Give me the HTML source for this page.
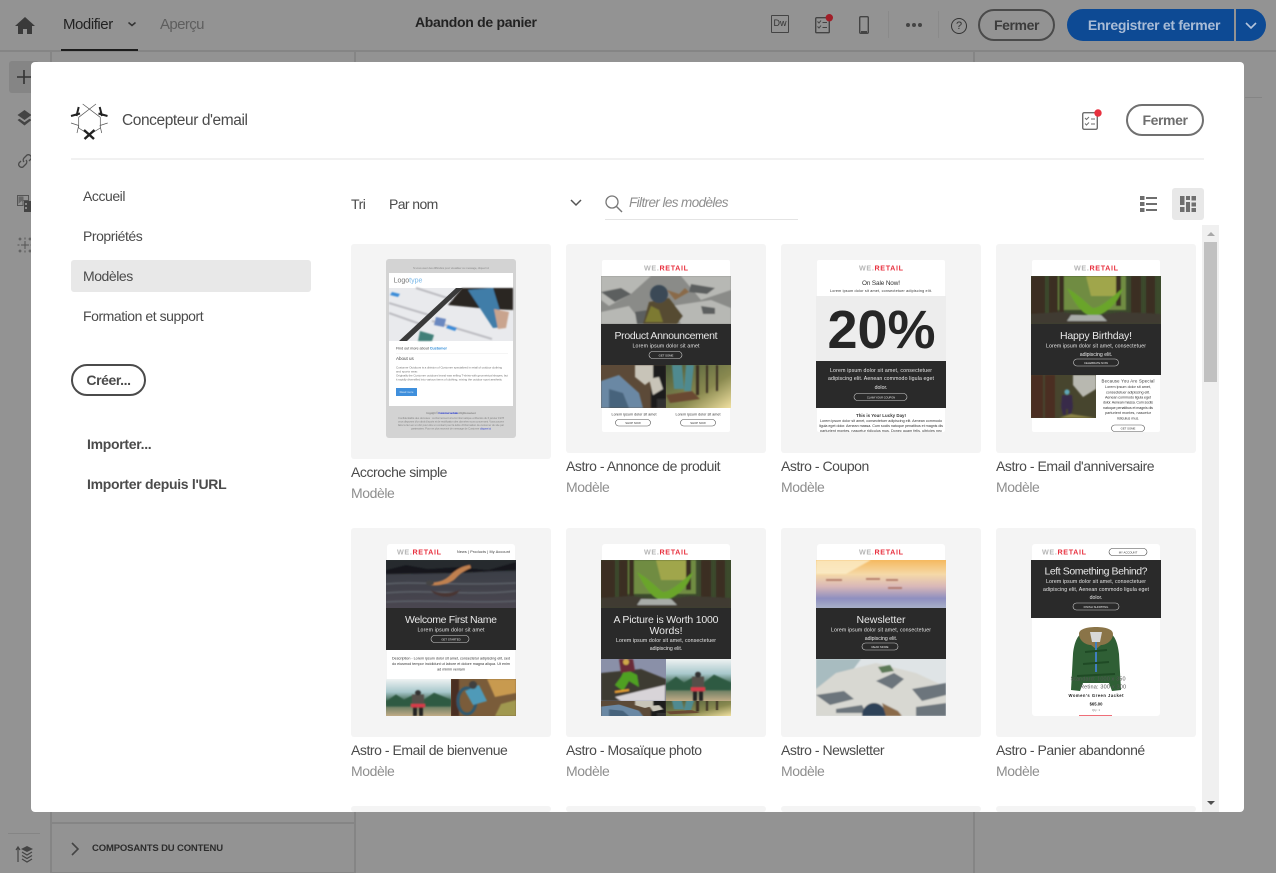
<!DOCTYPE html>
<html lang="fr">
<head>
<meta charset="utf-8">
<title>Concepteur d'email</title>
<style>
html,body{margin:0;padding:0;width:1276px;height:873px;overflow:hidden;background:#939393;font-family:"Liberation Sans",sans-serif}
*{box-sizing:border-box}
.a{position:absolute;white-space:nowrap}
.t{line-height:20px;height:20px;font-size:14px;letter-spacing:-.45px}
.line{position:absolute;background:#858585}
.pill{position:absolute;border-radius:17px;border:2px solid #666;text-align:center;font-weight:bold;font-size:14px;letter-spacing:-.4px}
#modal{position:absolute;left:31px;top:62px;width:1213px;height:750px;background:#fff;border-radius:4px;overflow:hidden}
#modal .a{color:#4b4b4b}
.card{position:absolute;width:200px;height:209px;background:#f4f4f4;border-radius:3px}
.card svg{position:absolute;left:35px;top:16px;width:130px;height:172px;filter:blur(.3px)}
.nm{position:absolute;white-space:nowrap;font-size:14px;letter-spacing:-.45px;color:#4b4b4b;line-height:20px}
.md{position:absolute;white-space:nowrap;font-size:14px;letter-spacing:-.42px;color:#8e8e8e;line-height:20px}
svg text{font-family:"Liberation Sans",sans-serif;text-anchor:middle}
.w{fill:#e8e8e8}.k{fill:#333}
.logo{font-size:7.2px;font-weight:bold}
.l{font-size:5.2px}.s{font-size:3.7px}
.h{font-size:10.5px}
</style>
</head>
<body>
<svg width="0" height="0" style="position:absolute">
<defs>
<filter id="b"><feGaussianBlur stdDeviation=".8"/></filter>
<linearGradient id="sky" x1="0" y1="0" x2="0" y2="1"><stop offset="0" stop-color="#f5b95f"/><stop offset=".3" stop-color="#f5d9a8"/><stop offset=".55" stop-color="#d9b8b8"/><stop offset=".8" stop-color="#8f8fc0"/><stop offset="1" stop-color="#a8b0c8"/></linearGradient>
<linearGradient id="wat" x1="0" y1="0" x2="0" y2="1"><stop offset="0" stop-color="#30343a"/><stop offset=".3" stop-color="#3d4048"/><stop offset="1" stop-color="#4a4650"/></linearGradient>
<linearGradient id="mts" x1="0" y1="0" x2="0" y2="1"><stop offset="0" stop-color="#eef2f2"/><stop offset=".35" stop-color="#a8c8cc"/><stop offset=".6" stop-color="#3f6650"/><stop offset="1" stop-color="#c0ab86"/></linearGradient>
<linearGradient id="wd" x1="0" y1="0" x2="1" y2="1"><stop offset="0" stop-color="#4a5a3a"/><stop offset=".6" stop-color="#8a8a50"/><stop offset="1" stop-color="#f0e0a0"/></linearGradient>
<symbol id="rocks" viewBox="0 0 130 48" preserveAspectRatio="none"><rect width="130" height="48" fill="#8a8b88"/><g filter="url(#b)"><path d="M0 0h50L30 18 8 30 0 24zM80 0h50v14L100 24zM70 30l40-6 20 8v16H80zM0 36l28-6 14 18H0z" fill="#b7b8b4"/><path d="M0 16l20-4 10 6-16 8zM90 8l24 4-8 6-18-2zM34 36l14-2 6 14H36zM100 30l14 2 0 6-12 0z" fill="#5c5e5e"/><path d="M42 48l6-22 20-4 14 18-6 8z" fill="#574c32"/><path d="M44 46l6-16 8 4 4 12z" fill="#7d7a30"/><circle cx="58" cy="18" r="9" fill="#3b4a56"/><path d="M66 14l12 4 6-6 4 4-14 8z" fill="#8a6a48"/></g></symbol>
<symbol id="forest" viewBox="0 0 130 48" preserveAspectRatio="none"><rect width="130" height="48" fill="#3c4a2c"/><g filter="url(#b)"><rect x="25" width="70" height="34" fill="#6f8c42"/><path d="M55 0h35v20H60z" fill="#a0a64c"/><path d="M0 0h14v48H0zM18 0h9v40h-9zM28 0h5v36h-5zM100 0h10v40h-10zM115 0h9v44h-9zM85 0h5v30h-5z" fill="#3b2e22"/><path d="M36 12c14 8 22 18 26 20 8 0 20-12 30-20-6 18-20 28-30 28S44 28 36 12z" fill="#6aa52a"/><path d="M0 38l30-2 30 4 30-4 40 2v10H0z" fill="#3f3a32"/><path d="M40 39l30 0 6 6H36z" fill="#a8aca8"/></g></symbol>
<symbol id="swim" viewBox="0 0 130 48" preserveAspectRatio="none"><rect width="130" height="48" fill="url(#wat)"/><g filter="url(#b)"><rect width="130" height="11" fill="#26292e"/><path d="M0 10l20-5 22 4 30-2 30 3 28-8v8L70 13 0 14z" fill="#15181b"/><path d="M0 24c30-3 60 2 130-1M0 33c40-4 80 3 130-2M0 42c40-3 90 2 130-1" stroke="#5c6068" stroke-width="1.500" fill="none"/><path d="M42 23c8-1 14-1 20-6 6-5 10-10 22-12l1 3c-8 3-12 7-16 11-4 4-16 8-27 6z" fill="#c08050"/><ellipse cx="44" cy="23" rx="4" ry="2.500" fill="#444"/><path d="M44 30c10 4 20 4 30 0-4 8-20 10-30 0z" fill="#4a3432"/></g></symbol>
<symbol id="sunset" viewBox="0 0 130 48" preserveAspectRatio="none"><rect width="130" height="48" fill="url(#sky)"/><g filter="url(#b)"><path d="M0 0h55L30 14H0z" fill="#fbeecb" opacity=".8"/><path d="M10 20h16M50 19h14M70 20h12M72 28h14" stroke="#a86a5a" stroke-width="1.600"/></g></symbol>
<symbol id="snowrock" viewBox="0 0 130 57" preserveAspectRatio="none"><rect width="130" height="57" fill="#dfe4e6"/><g filter="url(#b)"><path d="M0 0h45L30 20 0 30z" fill="#a8bcc0"/><path d="M20 14l40-10 40 10 30 14v29H0V30z" fill="#d8d8d2"/><path d="M0 36l28-4 10 8-24 6zM60 22l18-8 10 6-12 10zM96 30l34-6v12l-24 6zM20 50l26-4 4 8H20zM100 48l30-4v13h-30z" fill="#6c757c"/><path d="M62 8l12-2 4 6-12 2z" fill="#5d7a58"/><path d="M46 57c0-8 6-13 12-13s12 5 12 13z" fill="#2f4358"/><path d="M66 44l16 8 4 5H70z" fill="#8a6a48"/></g></symbol>
<symbol id="jeans" viewBox="0 0 65 43" preserveAspectRatio="none"><rect width="65" height="43" fill="#5c4a38"/><g filter="url(#b)"><path d="M0 16l18-6 20 18 4 15H0z" fill="#6a88a4"/><path d="M8 24l14 4 6 15H8z" fill="#47637c"/><rect x="50" width="15" height="43" fill="#1d1d1c"/><path d="M34 0h18v14l-8 6-10-8zM48 14l10-2 4 12-10 6z" fill="#c8c4b8"/><rect x="56" y="34" width="9" height="9" fill="#333"/></g></symbol>
<symbol id="woods" viewBox="0 0 65 43" preserveAspectRatio="none"><rect width="65" height="43" fill="url(#wd)"/><g filter="url(#b)"><path d="M30 0h3v30h-3zM40 0h2v28h-2zM50 0h2v26h-2zM20 0h4v26h-4z" fill="#3a2e20"/><path d="M6 0h10l2 24-10 0zM20 0h8l-3 26h-7z" fill="#4f8a90"/><path d="M0 30l26-4 8 8-30 4z" fill="#6a4a30"/></g></symbol>
<symbol id="hiker" viewBox="0 0 65 43" preserveAspectRatio="none"><rect width="65" height="43" fill="#47452e"/><g filter="url(#b)"><path d="M42 0h23v14L52 22 42 10z" fill="#b8b8b0"/><path d="M0 0h12v43H0zM14 0h10v43H14z" fill="#4b2e24"/><circle cx="36" cy="17" r="2.600" fill="#5fa6b8"/><path d="M31 20h10l1 12-2 8h-3v-6h-2v6h-3l-2-8z" fill="#392a48"/><path d="M28 43l12-4 25 4z" fill="#8a8244"/></g></symbol>
<symbol id="mount" viewBox="0 0 65 43" preserveAspectRatio="none"><rect width="65" height="43" fill="url(#mts)"/><g filter="url(#b)"><path d="M0 26l10-8 8 6 10-6 10 6 10-8 17 8v8H0z" fill="#2f5a42"/><rect x="26" y="18" width="12" height="14" fill="#55504a"/><circle cx="32" cy="16" r="3" fill="#333"/><rect x="25" y="29" width="14" height="4" fill="#d83a48"/><rect x="27" y="33" width="4" height="10" fill="#222"/><rect x="33" y="33" width="4" height="10" fill="#222"/></g></symbol>
<symbol id="bike" viewBox="0 0 65 37" preserveAspectRatio="none"><rect width="65" height="37" fill="#7a5c3a"/><g filter="url(#b)"><path d="M36 0h29v14L44 18z" fill="#c89a50"/><path d="M0 0h8v37H0z" fill="#4a2f24"/><path d="M44 37l6-12 15-4v16z" fill="#a09850"/><ellipse cx="16" cy="22" rx="9" ry="13" fill="none" stroke="#2f5870" stroke-width="3"/><path d="M14 12l14-6 8 16-14 4z" fill="#4f9ab8"/><circle cx="22" cy="6" r="4" fill="#3f3f3f"/></g></symbol>
<symbol id="skier" viewBox="0 0 65 42" preserveAspectRatio="none"><rect width="65" height="42" fill="#8a90a8"/><g filter="url(#b)"><path d="M0 14l40-4 25 10v22H0z" fill="#3e3a30"/><path d="M14 38l50-12v16H20z" fill="#d8d4d8"/><path d="M14 26l8 6 6-10 10 6-2-12-12-6-4 8z" fill="#4fa020"/><path d="M18 0h14l2 12-14 2z" fill="#6a2a38"/><circle cx="25" cy="3" r="3" fill="#cfa84a"/><path d="M14 33l14-2" stroke="#e8a030" stroke-width="2"/></g></symbol>
</defs>
</svg>

<!-- background app -->
<div class="line" style="left:0;top:50px;width:1276px;height:2px"></div>
<svg class="a" style="left:14px;top:16px" width="22" height="20" viewBox="0 0 22 20"><path d="M11 1L1 10h3v8h5v-5h4v5h5v-8h3z" fill="#3a3a3a"/></svg>
<div class="a" style="left:63px;top:15px;font-size:15px;letter-spacing:-.45px;color:#222;line-height:20px">Modifier</div>
<svg class="a" style="left:127px;top:21px" width="10" height="7" viewBox="0 0 10 7"><path d="M1.500 1.500L5 4.500l3.500-3" fill="none" stroke="#333" stroke-width="1.500"/></svg>
<div class="a" style="left:160px;top:15px;font-size:15px;letter-spacing:-.6px;color:#5e5e5e;line-height:20px">Aperçu</div>
<div class="a" style="left:61px;top:49px;width:77px;height:2px;background:#1c1c1c"></div>
<div class="a" style="left:415px;top:12px;font-size:14px;letter-spacing:-.3px;font-weight:bold;color:#222;line-height:20px">Abandon de panier</div>
<div class="a" style="left:771px;top:15px;width:18px;height:18px;border:1.500px solid #444;border-radius:1px;font-size:9px;line-height:15px;text-align:center;color:#333">Dw</div>
<svg class="a" style="left:812px;top:13px" width="24" height="22" viewBox="0 0 24 22"><rect x="3.700" y="4.700" width="13.600" height="15" rx="1" fill="none" stroke="#444" stroke-width="1.400"/><path d="M5.500 8.500l1.500 1.500 2-2.500M5.500 13.500L7 15l2-2.500M10.500 9.500h4.500M10.500 14.500h4.500" fill="none" stroke="#444"/><circle cx="17.300" cy="4.700" r="3.700" fill="#a11e28"/></svg>
<svg class="a" style="left:857px;top:14px" width="14" height="22" viewBox="0 0 14 22"><rect x="2.700" y="2.700" width="8.600" height="16.600" rx="1.200" fill="none" stroke="#444" stroke-width="1.400"/><rect x="4" y="17" width="6" height="2" fill="#444"/></svg>
<div class="a" style="left:888px;top:11px;width:1px;height:27px;background:#8a8a8a"></div>
<svg class="a" style="left:905px;top:22px" width="18" height="6" viewBox="0 0 18 6"><circle cx="3" cy="3" r="2" fill="#444"/><circle cx="9" cy="3" r="2" fill="#444"/><circle cx="15" cy="3" r="2" fill="#444"/></svg>
<div class="a" style="left:938px;top:11px;width:1px;height:27px;background:#8a8a8a"></div>
<div class="a" style="left:951px;top:18px;width:16px;height:16px;border:1.200px solid #333;border-radius:50%;font-size:11px;line-height:14px;text-align:center;color:#333">?</div>
<div class="pill" style="left:978px;top:9px;width:77px;height:32px;border-color:#4a4a4a;color:#3c3c3c;line-height:28px">Fermer</div>
<div class="a" style="left:1067px;top:9px;width:167px;height:32px;padding-left:7px;background:#0d4a94;border-radius:16px 0 0 16px;color:#a9bcd6;font-weight:bold;font-size:14px;letter-spacing:-.3px;line-height:32px;text-align:center">Enregistrer et fermer</div>
<div class="a" style="left:1236px;top:9px;width:30px;height:32px;background:#0d4a94;border-radius:0 16px 16px 0"></div>
<svg class="a" style="left:1244px;top:21px" width="14" height="10" viewBox="0 0 14 10"><path d="M2 2l5 5 5-5" fill="none" stroke="#b5c5dc" stroke-width="1.600"/></svg>

<div class="line" style="left:50px;top:50px;width:2px;height:823px"></div>
<div class="line" style="left:354px;top:50px;width:2px;height:823px"></div>
<div class="line" style="left:973px;top:50px;width:2px;height:823px"></div>
<div class="line" style="left:1245px;top:97px;width:17px;height:1px"></div>
<div class="line" style="left:50px;top:822px;width:305px;height:2px"></div>
<div class="line" style="left:50px;top:872px;width:305px;height:1px"></div>
<div class="a" style="left:9px;top:61px;width:30px;height:32px;background:#858585;border-radius:3px"></div>
<svg class="a" style="left:17px;top:70px" width="14" height="14" viewBox="0 0 14 14"><path d="M7 0v14M0 7h14" stroke="#333" stroke-width="1.600"/></svg>
<svg class="a" style="left:17px;top:110px" width="15" height="17" viewBox="0 0 15 17"><path d="M7.500 0l7 5-7 5-7-5zM.5 10l2-1.300 5 3.500 5-3.500 2 1.300-7 5.500z" fill="#444"/></svg>
<svg class="a" style="left:17px;top:153px" width="16" height="16" viewBox="0 0 16 16"><path d="M7 9a3 3 0 0 1 0-4l3-3a3 3 0 0 1 4 4l-2 2M9 7a3 3 0 0 1 0 4l-3 3a3 3 0 0 1-4-4l2-2" fill="none" stroke="#4a4a4a" stroke-width="1.300"/></svg>
<svg class="a" style="left:17px;top:195px" width="16" height="17" viewBox="0 0 16 17"><path d="M.5.500h11v5H6v5H.5z" fill="none" stroke="#555"/><path d="M1.500 9l3-3 2 2V1.500H1.500z" fill="#666"/><path d="M7 6h9v11H7z" fill="#444"/><path d="M8 8h2v2H8zM8 12h2v2H8z" fill="#8a8a8a"/></svg>
<svg class="a" style="left:17px;top:237px" width="16" height="16" viewBox="0 0 16 16"><path d="M8 4v8M4 8h8M3 .5v3M1.500 2h3M13 .5v3M11.500 2h3M3 12.500v3M1.500 14h3M13 12.500v3M11.500 14h3M8 .5v2M8 13.500v2M.5 8h2M13.500 8h2" stroke="#555"/></svg>
<div class="line" style="left:8px;top:833px;width:32px;height:1px"></div>
<svg class="a" style="left:15px;top:845px" width="20" height="18" viewBox="0 0 20 18"><path d="M3 17V3M1 5l2-3 2 3" fill="none" stroke="#444" stroke-width="1.200"/><path d="M12 1l6 3-6 3-6-3z" fill="#444"/><path d="M7 7l5 3 5-3M7 10.500l5 3 5-3M7 14l5 3 5-3" fill="none" stroke="#444" stroke-width="1.200"/></svg>
<svg class="a" style="left:70px;top:841px" width="11" height="16" viewBox="0 0 11 16"><path d="M2 2l6 6-6 6" fill="none" stroke="#444" stroke-width="1.600"/></svg>
<div class="a" style="left:92px;top:842px;font-size:9.500px;font-weight:bold;letter-spacing:-.15px;line-height:14px;color:#2c2c2c">COMPOSANTS DU CONTENU</div>

<!-- modal -->
<div id="modal">
  <svg class="a" style="left:38px;top:38px" width="41" height="40" viewBox="0 0 41 40">
    <path d="M13.700 4L31.300 17.300M27 4L9.700 17.300M9.700 17.300V28M31.300 17.300V28M9.700 28L20.300 34.700M31.300 28L20.300 34.700M2 23l7.700 2.500L8 33M38.700 23L31 25.500 32.700 33" stroke="#555" stroke-width=".7" fill="none"/>
    <path d="M9.700 7L7.500 16M2 16l9-2.500M30.700 7L33 16M38.500 16l-9-2.500" stroke="#222" stroke-width="2" fill="none"/>
    <path d="M15 30l10 9M25.500 30l-10 9" stroke="#222" stroke-width="2.400" fill="none"/>
  </svg>
  <div class="a" style="left:91px;top:49px;font-size:15.500px;letter-spacing:-.42px;line-height:20px">Concepteur d'email</div>
  <svg class="a" style="left:1050px;top:45px" width="24" height="24" viewBox="0 0 24 24"><rect x="1.700" y="5.700" width="14.600" height="16.600" rx="1.500" fill="none" stroke="#6e6e6e" stroke-width="1.400"/><path d="M4 11l1.500 1.500L8 10M4 16.500L5.500 18 8 15.500M10 12h4M10 17h4" fill="none" stroke="#6e6e6e"/><circle cx="17" cy="6" r="3.700" fill="#e8313f"/></svg>
  <div class="pill" style="left:1095px;top:42px;width:78px;height:32px;border-color:#707070;color:#6e6e6e;line-height:28px">Fermer</div>
  <div class="a" style="left:40px;top:96px;width:1133px;height:2px;background:#f1f1f1"></div>

  <div class="a t" style="left:52px;top:124px">Accueil</div>
  <div class="a t" style="left:52px;top:164px">Propriétés</div>
  <div class="a" style="left:40px;top:198px;width:240px;height:32px;background:#e8e8e8;border-radius:3px"></div>
  <div class="a t" style="left:52px;top:204px">Modèles</div>
  <div class="a t" style="left:52px;top:244px">Formation et support</div>
  <div class="pill" style="left:40px;top:302px;width:75px;height:32px;border-color:#4b4b4b;color:#4b4b4b;line-height:28px">Créer...</div>
  <div class="a t" style="left:56px;top:372px;font-weight:bold;letter-spacing:-.3px">Importer...</div>
  <div class="a t" style="left:56px;top:412px;font-weight:bold;letter-spacing:-.3px">Importer depuis l'URL</div>

  <div class="a t" style="left:320px;top:132px">Tri</div>
  <div class="a t" style="left:358px;top:132px;letter-spacing:-.6px">Par nom</div>
  <svg class="a" style="left:538px;top:136px" width="14" height="10" viewBox="0 0 14 10"><path d="M2 2l5 5 5-5" fill="none" stroke="#555" stroke-width="1.500"/></svg>
  <svg class="a" style="left:573px;top:132px" width="20" height="20" viewBox="0 0 20 20"><circle cx="8" cy="8" r="6" fill="none" stroke="#777" stroke-width="1.300"/><path d="M12.500 12.500L18 18" stroke="#777" stroke-width="1.400"/></svg>
  <div class="a t" style="left:598px;top:131px;font-style:italic;color:#8e8e8e;font-size:13.500px;letter-spacing:-.6px">Filtrer les modèles</div>
  <div class="a" style="left:574px;top:157px;width:193px;height:1px;background:#e4e4e4"></div>
  <svg class="a" style="left:1109px;top:134px" width="17" height="16" viewBox="0 0 17 16"><path d="M0 0h4.500v4H0zM0 6h4.500v4H0zM0 12h4.500v4H0zM6 1h11v2H6zM6 7h11v2H6zM6 13h11v2H6z" fill="#6e6e6e"/></svg>
  <div class="a" style="left:1141px;top:126px;width:32px;height:32px;background:#e8e8e8;border-radius:3px"></div>
  <svg class="a" style="left:1149px;top:134px" width="16" height="16" viewBox="0 0 16 16"><path d="M0 0h4.500v9H0zM0 11h4.500v5H0zM6 0h4v4H6zM6 6h4v10H6zM11.500 0H16v4.500h-4.500zM11.500 6.500H16v4h-4.500zM11.500 12H16v4h-4.500z" fill="#6e6e6e"/></svg>

  <!-- row 1 -->
  <div class="card" style="left:320px;top:182px;height:215px">
    <svg viewBox="0 0 130 179" style="left:35px;top:15px;width:130px;height:179px">
      <rect width="130" height="179" rx="3" fill="#d3d3d3"/>
      <text x="65" y="10" font-size="2.800" fill="#8c8c8c" textLength="76">Si vous avez des difficultés pour visualiser ce message, cliquez ici</text>
      <rect x="3" y="14" width="124" height="133" fill="#fff"/>
      <text x="22" y="23.500" font-size="7" fill="#777">Logo<tspan fill="#7ab8e8">type</tspan></text>
      <rect x="3" y="29" width="124" height="53" fill="#e9eaed"/>
      <g filter="url(#b)">
        <path d="M3 44l40 12M3 54l34 12M30 29l50 16M46 62l60 18" stroke="#bdbdc2" stroke-width="2"/>
        <path d="M76 29h51v22l-24-1-41-4z" fill="#2a2622"/>
        <path d="M82 31l25-2 12 39-12 1z" fill="#3f7da8"/>
        <path d="M108 50l15 3-3 16-8 1z" fill="#c9a48e"/>
        <path d="M50 58l10 2-2 8-10-2z" fill="#6a88c0"/>
        <path d="M34 72l14 4-2 6H32z" fill="#3f7f78"/>
        <path d="M6 33l8 2-2 3-8-2zM62 66l9 3-2 3-9-3z" fill="#3a8cd8"/>
      </g>
      <path d="M70 29h7L21 82h-8z" fill="#3a3a3a"/>
      <text x="10" y="90.500" font-size="3.800" fill="#444" style="text-anchor:start" textLength="51">Find out more about <tspan fill="#2f8cd8" font-weight="bold">Customer</tspan></text>
      <rect x="10" y="94" width="112" height=".6" fill="#eee"/>
      <text x="10" y="101" font-size="4.500" fill="#444" style="text-anchor:start">About us</text>
      <text x="10" y="109.500" font-size="3" fill="#777" style="text-anchor:start" textLength="106">Customer Outdoors is a division of Customer specialized in retail of outdoor clothing</text>
      <text x="10" y="113.500" font-size="3" fill="#777" style="text-anchor:start">and sports wear.</text>
      <text x="10" y="117.500" font-size="3" fill="#777" style="text-anchor:start" textLength="112">Originally the Customer outdoors brand was selling T-shirts with geometrical shapes, but</text>
      <text x="10" y="121.500" font-size="3" fill="#777" style="text-anchor:start" textLength="106">it rapidly diversified into various items of clothing, mixing the outdoor sport aesthetic</text>
      <rect x="10" y="129" width="21" height="8" fill="#3f8fdc"/>
      <text x="20.500" y="134" font-size="2.800" fill="#d8e8f8">Read more</text>
      <text x="65" y="155" font-size="2.800" fill="#777" textLength="50">Copyright © <tspan fill="#3344cc" font-weight="bold">Customer website</tspan> All rights reserved.</text>
      <text x="65" y="160" font-size="2.800" fill="#888" textLength="106">Confidentialité des données : conformément à la loi informatique et libertés du 6 janvier 1978</text>
      <text x="65" y="163.500" font-size="2.800" fill="#888" textLength="106">vous disposez d'un droit d'accès et de rectification des données vous concernant. Vous pouvez</text>
      <text x="65" y="167" font-size="2.800" fill="#888" textLength="106">faire le lien en un clic pour être un contact pour la lettre d'information de customer du site par</text>
      <text x="65" y="170.500" font-size="2.800" fill="#888" textLength="80">partenaires. Pour ne plus recevoir de message de Customer <tspan fill="#3344cc">cliquez ici</tspan></text>
    </svg>
  </div>
  <div class="nm" style="left:320px;top:400px">Accroche simple</div>
  <div class="md" style="left:320px;top:421px">Modèle</div>

  <div class="card" style="left:535px;top:182px">
    <svg viewBox="0 0 130 172">
      <rect x="1" width="128" height="172" fill="#fff" rx="2"/>
      <text x="65" y="10.500" class="logo" fill="#b5b5b5" textLength="44">WE.<tspan fill="#e8313f">RETAIL</tspan></text>
      <use href="#rocks" x="0" y="16" width="130" height="48"/>
      <rect y="64" width="130" height="41" fill="#2a2a2a"/>
      <text x="65" y="79" class="h w" textLength="103">Product Announcement</text>
      <text x="65" y="87.500" class="l w" textLength="67">Lorem ipsum dolor sit amet</text>
      <rect x="48" y="91.500" width="33" height="7" rx="3.500" fill="none" stroke="#ccc" stroke-width=".6"/>
      <text x="65" y="96.500" font-size="2.800" class="w">GET SOME</text>
      <use href="#jeans" x="0" y="105" width="65" height="43"/>
      <use href="#woods" x="65" y="105" width="65" height="43"/>
      <text x="33" y="155.500" class="s k" textLength="45">Lorem ipsum dolor sit amet</text>
      <text x="97" y="155.500" class="s k" textLength="45">Lorem ipsum dolor sit amet</text>
      <rect x="14.500" y="159.500" width="35" height="6.500" rx="3.200" fill="#fff" stroke="#555" stroke-width=".6"/>
      <rect x="79.500" y="159.500" width="35" height="6.500" rx="3.200" fill="#fff" stroke="#555" stroke-width=".6"/>
      <text x="32" y="164" font-size="2.800" class="k">SHOP NOW</text>
      <text x="97" y="164" font-size="2.800" class="k">SHOP NOW</text>
    </svg>
  </div>
  <div class="nm" style="left:535px;top:394px">Astro - Annonce de produit</div>
  <div class="md" style="left:535px;top:415px">Modèle</div>

  <div class="card" style="left:750px;top:182px">
    <svg viewBox="0 0 130 172">
      <rect x="1" width="128" height="172" fill="#fff" rx="2"/>
      <text x="65" y="10.500" class="logo" fill="#b5b5b5" textLength="44">WE.<tspan fill="#e8313f">RETAIL</tspan></text>
      <text x="65" y="25" font-size="6.400" class="k" textLength="38">On Sale Now!</text>
      <text x="65" y="32" class="s k" textLength="102">Lorem ipsum dolor sit amet, consectetuer adipiscing elit.</text>
      <rect y="36" width="130" height="65" fill="#ededed"/>
      <text x="65.500" y="88" font-size="54" font-weight="bold" fill="#262626">20%</text>
      <rect y="101" width="130" height="47" fill="#2a2a2a"/>
      <text x="65" y="112" class="l w" textLength="102">Lorem ipsum dolor sit amet, consectetuer</text>
      <text x="65" y="120" class="l w" textLength="106">adipiscing elit. Aenean commodo ligula eget</text>
      <text x="65" y="129" class="l w">dolor.</text>
      <rect x="38" y="133.500" width="53" height="7" rx="3.500" fill="none" stroke="#ccc" stroke-width=".6"/>
      <text x="65" y="138.500" font-size="2.600" class="w">CLAIM YOUR COUPON</text>
      <text x="65" y="157" font-size="4.400" font-weight="bold" class="k" textLength="50">This is Your Lucky Day!</text>
      <text x="65" y="162" class="s k" textLength="122">Lorem ipsum dolor sit amet, consectetuer adipiscing elit. Aenean commodo</text>
      <text x="65" y="167" class="s k" textLength="124">ligula eget dolor. Aenean massa. Cum sociis natoque penatibus et magnis dis</text>
      <text x="65" y="172" class="s k" textLength="122">parturient montes, nascetur ridiculus mus. Donec quam felis, ultricies nec</text>
    </svg>
  </div>
  <div class="nm" style="left:750px;top:394px">Astro - Coupon</div>
  <div class="md" style="left:750px;top:415px">Modèle</div>

  <div class="card" style="left:965px;top:182px">
    <svg viewBox="0 0 130 172">
      <rect x="1" width="128" height="172" fill="#fff" rx="2"/>
      <text x="65" y="10.500" class="logo" fill="#b5b5b5" textLength="44">WE.<tspan fill="#e8313f">RETAIL</tspan></text>
      <use href="#forest" x="0" y="16" width="130" height="48"/>
      <rect y="64" width="130" height="51" fill="#2a2a2a"/>
      <text x="65" y="79" class="h w" textLength="72">Happy Birthday!</text>
      <text x="65" y="87.500" class="l w" textLength="100">Lorem ipsum dolor sit amet, consectetuer</text>
      <text x="65" y="96" class="l w">adipiscing elit.</text>
      <rect x="42.500" y="99" width="45" height="7" rx="3.500" fill="none" stroke="#ccc" stroke-width=".6"/>
      <text x="65" y="104" font-size="2.800" class="w">CELEBRATE NOW</text>
      <use href="#hiker" x="0" y="115" width="65" height="43"/>
      <text x="97" y="122.500" font-size="4.300" class="k" textLength="53">Because You Are Special</text>
      <text x="97" y="128" class="s k" textLength="46">Lorem ipsum dolor sit amet,</text>
      <text x="97" y="133.300" class="s k" textLength="44">consectetuer adipiscing elit.</text>
      <text x="97" y="138.500" class="s k" textLength="46">Aenean commodo ligula eget</text>
      <text x="97" y="143.700" class="s k" textLength="50">dolor. Aenean massa. Cum sociis</text>
      <text x="97" y="149" class="s k" textLength="50">natoque penatibus et magnis dis</text>
      <text x="97" y="154.200" class="s k" textLength="46">parturient montes, nascetur</text>
      <text x="97" y="159.500" class="s k">ridiculus mus.</text>
      <rect x="80.500" y="165" width="33" height="6.500" rx="3.200" fill="#fff" stroke="#555" stroke-width=".6"/>
      <text x="97" y="169.500" font-size="2.800" class="k">GET SOME</text>
    </svg>
  </div>
  <div class="nm" style="left:965px;top:394px">Astro - Email d'anniversaire</div>
  <div class="md" style="left:965px;top:415px">Modèle</div>

  <!-- row 2 -->
  <div class="card" style="left:320px;top:466px">
    <svg viewBox="0 0 130 172">
      <rect x="1" width="128" height="172" fill="#fff" rx="3"/>
      <text x="33" y="10.500" class="logo" fill="#b5b5b5" textLength="44">WE.<tspan fill="#e8313f">RETAIL</tspan></text>
      <text x="97.500" y="9" class="s k" textLength="53">News | Products | My Account</text>
      <use href="#swim" x="0" y="16" width="130" height="48"/>
      <rect y="64" width="130" height="42" fill="#2a2a2a"/>
      <text x="65" y="79" class="h w" textLength="92">Welcome First Name</text>
      <text x="65" y="87.500" class="l w" textLength="67">Lorem ipsum dolor sit amet</text>
      <rect x="45" y="91.500" width="38" height="7" rx="3.500" fill="none" stroke="#ccc" stroke-width=".6"/>
      <text x="65" y="96.500" font-size="2.800" class="w">GET STARTED</text>
      <text x="65" y="115.500" class="s k" textLength="118">Description - Lorem ipsum dolor sit amet, consectetur adipiscing elit, sed</text>
      <text x="65" y="121" class="s k" textLength="118">do eiusmod tempor incididunt ut labore et dolore magna aliqua. Ut enim</text>
      <text x="65" y="126.500" class="s k">ad minim veniam</text>
      <use href="#mount" x="0" y="135" width="65" height="37"/>
      <use href="#bike" x="65" y="135" width="65" height="37"/>
    </svg>
  </div>
  <div class="nm" style="left:320px;top:678px">Astro - Email de bienvenue</div>
  <div class="md" style="left:320px;top:699px">Modèle</div>

  <div class="card" style="left:535px;top:466px">
    <svg viewBox="0 0 130 172">
      <rect x="1" width="128" height="172" fill="#fff" rx="3"/>
      <text x="65" y="10.500" class="logo" fill="#b5b5b5" textLength="44">WE.<tspan fill="#e8313f">RETAIL</tspan></text>
      <use href="#forest" x="0" y="16" width="130" height="48"/>
      <rect y="64" width="130" height="51" fill="#2a2a2a"/>
      <text x="65" y="79" class="h w" textLength="105">A Picture is Worth 1000</text>
      <text x="65" y="90" class="h w">Words!</text>
      <text x="65" y="98" class="l w" textLength="100">Lorem ipsum dolor sit amet, consectetuer</text>
      <text x="65" y="106" class="l w">adipiscing elit.</text>
      <use href="#skier" x="0" y="115" width="65" height="42"/>
      <use href="#mount" x="65" y="115" width="65" height="42"/>
      <use href="#jeans" x="0" y="157" width="65" height="15"/>
      <use href="#woods" x="65" y="157" width="65" height="15"/>
    </svg>
  </div>
  <div class="nm" style="left:535px;top:678px">Astro - Mosaïque photo</div>
  <div class="md" style="left:535px;top:699px">Modèle</div>

  <div class="card" style="left:750px;top:466px">
    <svg viewBox="0 0 130 172">
      <rect x="1" width="128" height="172" fill="#fff" rx="3"/>
      <text x="65" y="10.500" class="logo" fill="#b5b5b5" textLength="44">WE.<tspan fill="#e8313f">RETAIL</tspan></text>
      <use href="#sunset" x="0" y="16" width="130" height="48"/>
      <rect y="64" width="130" height="51" fill="#2a2a2a"/>
      <text x="65" y="79" class="h w" textLength="49">Newsletter</text>
      <text x="65" y="87.500" class="l w" textLength="100">Lorem ipsum dolor sit amet, consectetuer</text>
      <text x="65" y="96" class="l w">adipiscing elit.</text>
      <rect x="46" y="99" width="36" height="7" rx="3.500" fill="none" stroke="#ccc" stroke-width=".6"/>
      <text x="64" y="104" font-size="2.800" class="w">READ MORE</text>
      <use href="#snowrock" x="0" y="115" width="130" height="57"/>
    </svg>
  </div>
  <div class="nm" style="left:750px;top:678px">Astro - Newsletter</div>
  <div class="md" style="left:750px;top:699px">Modèle</div>

  <div class="card" style="left:965px;top:466px">
    <svg viewBox="0 0 130 172">
      <rect x="1" width="128" height="172" fill="#fff" rx="3"/>
      <text x="33" y="10.500" class="logo" fill="#b5b5b5" textLength="44">WE.<tspan fill="#e8313f">RETAIL</tspan></text>
      <rect x="78" y="4.500" width="38" height="7" rx="3.500" fill="#fff" stroke="#444" stroke-width=".6"/>
      <text x="97" y="9.300" font-size="2.800" class="k">MY ACCOUNT</text>
      <rect y="16" width="130" height="58" fill="#2a2a2a"/>
      <text x="65" y="30.500" class="h w" textLength="103">Left Something Behind?</text>
      <text x="65" y="39" class="l w" textLength="100">Lorem ipsum dolor sit amet, consectetuer</text>
      <text x="65" y="47" class="l w" textLength="106">adipiscing elit, Aenean commodo ligula eget</text>
      <text x="65" y="55" class="l w">dolor.</text>
      <rect x="42" y="59" width="46" height="7" rx="3.500" fill="none" stroke="#ccc" stroke-width=".6"/>
      <text x="65" y="64" font-size="2.800" class="w">FINISH SHOPPING</text>
      <path d="M50 90c-4 2-7 10-8 20l-2 36 9 1 3-8h26l3 8 9-1-2-36c-1-10-4-18-8-20z" fill="#2f5f35"/>
      <path d="M48 90c0-5 8-7 17-7s17 2 17 7c0 6-6 11-12 11l-5 4-5-4c-6 0-12-5-12-11z" fill="#8a7448"/>
      <path d="M59 88h12l-2 10h-8z" fill="#d8d8d8"/>
      <rect x="64" y="98" width="2" height="30" fill="#3f7ec0"/>
      <path d="M54 108l22-2M52 120l26-2M46 132l38-2" stroke="#1f4a25" stroke-width="2"/>
      <text x="67" y="136.500" font-size="5.500" fill="#555" textLength="55">Standard: 1000 x 350</text>
      <text x="72" y="144.500" font-size="5.500" fill="#555" textLength="46">Retina: 300 x 300</text>
      <text x="65" y="153" font-size="4.200" font-weight="bold" fill="#222" textLength="55">Women's Green Jacket</text>
      <text x="65" y="161.500" font-size="4.200" font-weight="bold" fill="#222">$65.00</text>
      <text x="65" y="167" font-size="3" fill="#777">Qty: 1</text>
      <rect x="48" y="171.300" width="33" height=".7" fill="#e8313f"/>
    </svg>
  </div>
  <div class="nm" style="left:965px;top:678px">Astro - Panier abandonné</div>
  <div class="md" style="left:965px;top:699px">Modèle</div>

  <!-- row 3 -->
  <div class="card" style="left:320px;top:744px;height:6px"></div>
  <div class="card" style="left:535px;top:744px;height:6px"></div>
  <div class="card" style="left:750px;top:744px;height:6px"></div>
  <div class="card" style="left:965px;top:744px;height:6px"></div>

  <!-- scrollbar -->
  <div class="a" style="left:1171px;top:163px;width:17px;height:587px;background:#f0f0f0"></div>
  <div class="a" style="left:1173px;top:180px;width:13px;height:140px;background:#c1c1c1"></div>
  <div class="a" style="left:1176px;top:170px;width:0;height:0;border-left:4px solid transparent;border-right:4px solid transparent;border-bottom:4px solid #a8a8a8"></div>
  <div class="a" style="left:1176px;top:739px;width:0;height:0;border-left:4px solid transparent;border-right:4px solid transparent;border-top:4px solid #505050"></div>
</div>
</body>
</html>
